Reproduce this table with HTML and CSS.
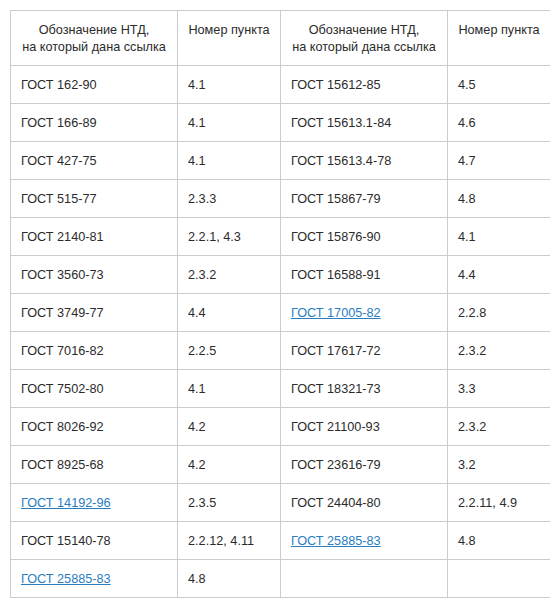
FILE: index.html
```html
<!DOCTYPE html>
<html lang="ru">
<head>
<meta charset="utf-8">
<link rel="stylesheet" href="styles.css">
</head>
<body>
<table class="ntd">
<colgroup>
<col class="c-name"><col class="c-num"><col class="c-name"><col class="c-num">
</colgroup>
<thead>
<tr>
<th>Обозначение НТД,<br>на который дана ссылка</th>
<th>Номер пункта</th>
<th>Обозначение НТД,<br>на который дана ссылка</th>
<th>Номер пункта</th>
</tr>
</thead>
<tbody>
<tr><td>ГОСТ 162-90</td><td>4.1</td><td>ГОСТ 15612-85</td><td>4.5</td></tr>
<tr><td>ГОСТ 166-89</td><td>4.1</td><td>ГОСТ 15613.1-84</td><td>4.6</td></tr>
<tr><td>ГОСТ 427-75</td><td>4.1</td><td>ГОСТ 15613.4-78</td><td>4.7</td></tr>
<tr><td>ГОСТ 515-77</td><td>2.3.3</td><td>ГОСТ 15867-79</td><td>4.8</td></tr>
<tr><td>ГОСТ 2140-81</td><td>2.2.1, 4.3</td><td>ГОСТ 15876-90</td><td>4.1</td></tr>
<tr><td>ГОСТ 3560-73</td><td>2.3.2</td><td>ГОСТ 16588-91</td><td>4.4</td></tr>
<tr><td>ГОСТ 3749-77</td><td>4.4</td><td><a href="#">ГОСТ 17005-82</a></td><td>2.2.8</td></tr>
<tr><td>ГОСТ 7016-82</td><td>2.2.5</td><td>ГОСТ 17617-72</td><td>2.3.2</td></tr>
<tr><td>ГОСТ 7502-80</td><td>4.1</td><td>ГОСТ 18321-73</td><td>3.3</td></tr>
<tr><td>ГОСТ 8026-92</td><td>4.2</td><td>ГОСТ 21100-93</td><td>2.3.2</td></tr>
<tr><td>ГОСТ 8925-68</td><td>4.2</td><td>ГОСТ 23616-79</td><td>3.2</td></tr>
<tr><td><a href="#">ГОСТ 14192-96</a></td><td>2.3.5</td><td>ГОСТ 24404-80</td><td>2.2.11, 4.9</td></tr>
<tr><td>ГОСТ 15140-78</td><td>2.2.12, 4.11</td><td><a href="#">ГОСТ 25885-83</a></td><td>4.8</td></tr>
<tr><td><a href="#">ГОСТ 25885-83</a></td><td>4.8</td><td></td><td></td></tr>
</tbody>
</table>
</body>
</html>
```
FILE: styles.css
```css
html, body {
  background: #fff;
}
body {
  margin: 10px;
  font-family: "Liberation Sans", Arial, sans-serif;
  font-size: 12.7px;
  line-height: 17px;
  color: #2b2b2b;
}
.ntd {
  border-collapse: collapse;
  table-layout: fixed;
  width: 541px;
}
.c-name { width: 167px; }
.c-num { width: 103px; }
.ntd th,
.ntd td {
  border: 1px solid #ccc;
  padding: 11px 10px 9px;
  vertical-align: top;
  text-align: left;
  height: 17px;
}
.ntd th {
  font-weight: normal;
  text-align: center;
  white-space: nowrap;
}
.ntd a {
  color: #2a7dbf;
  text-decoration: underline;
}
```
